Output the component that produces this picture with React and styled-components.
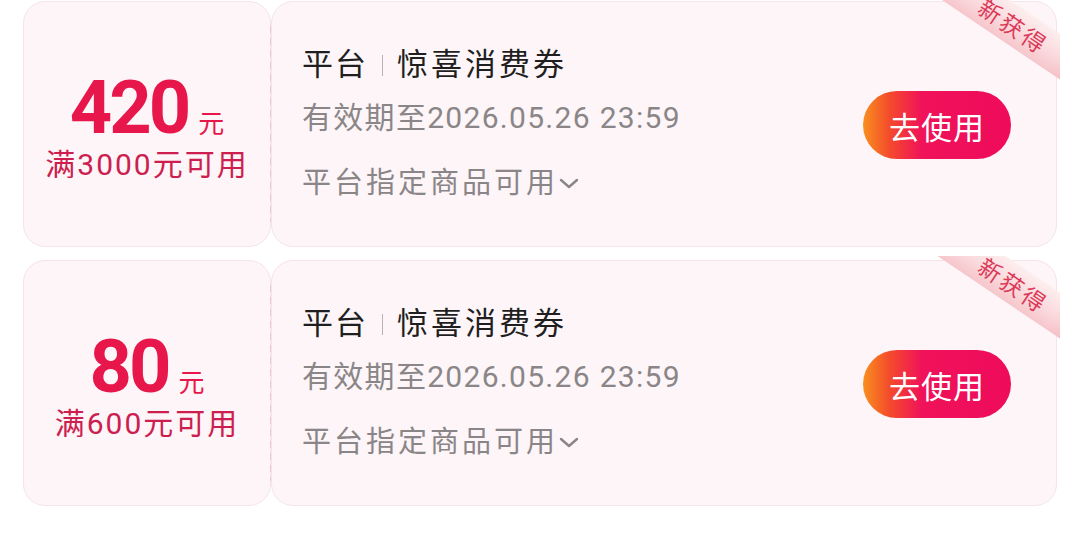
import styled, { createGlobalStyle } from "styled-components";

const GlobalStyle = createGlobalStyle`
  html, body {
    margin: 0;
    padding: 0;
    background: #ffffff;
  }
  body {
    font-family: Roboto, "Noto Sans CJK SC", sans-serif;
  }
`;

// 쿠폰 목록 전체
const List = styled.div`
  display: flex;
  flex-direction: column;
  gap: 13px;
  padding: 1px 23px 0 23px;
`;

const Card = styled.div`
  display: flex;
  height: 246px;
`;

const Stub = styled.div`
  width: 246px;
  flex-shrink: 0;
  display: flex;
  flex-direction: column;
  align-items: center;
  justify-content: center;
  background: #fdf5f7;
  border: 1px solid #f6e4e9;
  border-radius: 22px;
`;

const AmountRow = styled.div`
  display: flex;
  align-items: baseline;
  color: #e8174b;
  line-height: 1;
  margin-top: 6px;
`;

const Amount = styled.span`
  font-family: Roboto, sans-serif;
  font-weight: 700;
  font-size: 74px;
  letter-spacing: -3px;
`;

const Unit = styled.span`
  font-family: "Noto Sans CJK SC", sans-serif;
  font-size: 26px;
  margin-left: 10px;
`;

const Threshold = styled.div`
  margin-top: 2px;
  font-size: 30px;
  letter-spacing: 2px;
  color: #cc1f50;
  line-height: 1.2;
`;

const Body = styled.div`
  position: relative;
  flex: 1;
  display: flex;
  align-items: center;
  justify-content: space-between;
  padding: 0 45px 0 30px;
  background: #fdf5f7;
  border: 1px solid #f6e4e9;
  border-radius: 22px;

  &::before {
    content: "";
    position: absolute;
    left: -2px;
    top: 24px;
    bottom: 24px;
    width: 1px;
    background: repeating-linear-gradient(180deg, #ecc8d2 0 7px, transparent 7px 12px);
  }
`;

const Info = styled.div`
  display: flex;
  flex-direction: column;
  margin-top: -5px;
`;

const Title = styled.div`
  display: flex;
  align-items: center;
  font-size: 31px;
  letter-spacing: 2px;
  color: #1f1f1f;
  line-height: 50px;
  margin-bottom: 3px;
`;

const Bar = styled.span`
  width: 1px;
  height: 21px;
  background: #b8b0b3;
  margin: 0 14px 0 14px;
`;

const Name = styled.span`
  letter-spacing: 3px;
`;

const Expire = styled.div`
  font-size: 30px;
  letter-spacing: 1.3px;
  color: #8a8688;
  line-height: 50px;
`;

const Scope = styled.div`
  display: flex;
  align-items: center;
  margin-top: 20px;
  font-size: 29px;
  letter-spacing: 3px;
  color: #8a8688;
  line-height: 40px;
`;

const UseButton = styled.button`
  width: 148px;
  height: 68px;
  border: none;
  border-radius: 34px;
  background: linear-gradient(90deg, #f8901f 0%, #f44a2c 18%, #f0125a 40%, #ee0b5b 100%);
  color: #ffffff;
  font-family: "Noto Sans CJK SC", sans-serif;
  font-size: 31px;
  letter-spacing: 1px;
  padding: 0;
  margin-top: 2px;
`;

// 오른쪽 위 "새로 받음" 리본
const RibbonClip = styled.div`
  position: absolute;
  top: -5px;
  right: -4px;
  width: 125px;
  height: 84px;
  overflow: hidden;
  pointer-events: none;
`;

const Ribbon = styled.div`
  position: absolute;
  left: -33px;
  top: 9px;
  width: 220px;
  height: 38px;
  transform: rotate(34deg);
  display: flex;
  align-items: center;
  justify-content: center;
  background: linear-gradient(180deg, #fdeeee 0%, #fadadd 55%, #f6c6cb 100%);
  color: #dc3a58;
  font-family: "Noto Sans CJK SC", sans-serif;
  font-size: 23px;
  line-height: 1;
  letter-spacing: 3px;
  padding-left: 2px;

  &::after {
    content: "";
    position: absolute;
    right: 0;
    top: 0;
    bottom: 0;
    width: 60px;
    background: linear-gradient(90deg, rgba(238, 150, 162, 0) 0%, rgba(238, 150, 162, 0.45) 100%);
  }
`;

const coupons = [
  { amount: "420", min: "满3000元可用" },
  { amount: "80", min: "满600元可用" },
];

function Chevron() {
  return (
    <svg width="22" height="14" viewBox="0 0 22 14">
      <path d="M3 4 L11 11 L19 4" fill="none" stroke="#8a8688" strokeWidth="2.4" strokeLinecap="round" strokeLinejoin="round" />
    </svg>
  );
}

function Coupon({ amount, min }) {
  return (
    <Card>
      <Stub>
        <AmountRow>
          <Amount>{amount}</Amount>
          <Unit>元</Unit>
        </AmountRow>
        <Threshold>{min}</Threshold>
      </Stub>
      <Body>
        <Info>
          <Title>
            平台<Bar />
            <Name>惊喜消费券</Name>
          </Title>
          <Expire>有效期至2026.05.26 23:59</Expire>
          <Scope>
            平台指定商品可用
            <Chevron />
          </Scope>
        </Info>
        <UseButton>去使用</UseButton>
        <RibbonClip>
          <Ribbon>新获得</Ribbon>
        </RibbonClip>
      </Body>
    </Card>
  );
}

export default function App() {
  return (
    <>
      <GlobalStyle />
      <List>
        {coupons.map((c) => (
          <Coupon key={c.amount} {...c} />
        ))}
      </List>
    </>
  );
}
